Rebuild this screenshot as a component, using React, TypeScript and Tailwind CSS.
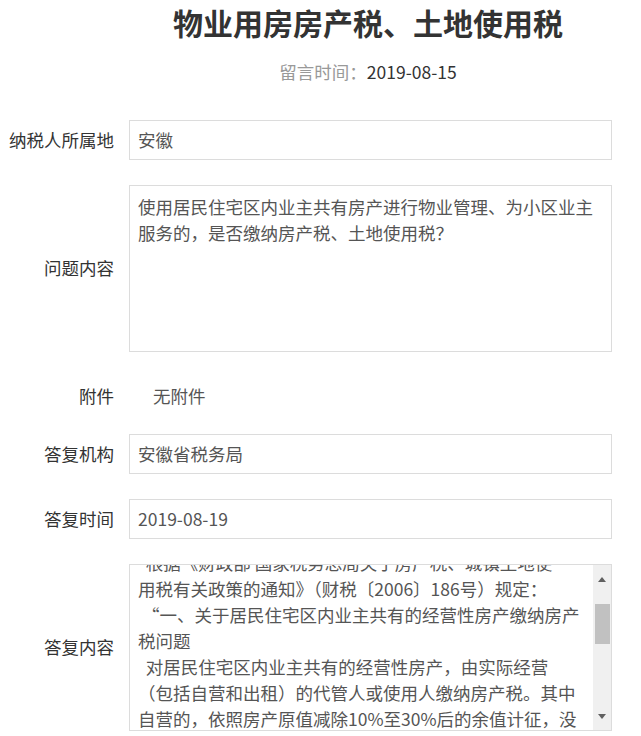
import React from 'react';

const question = [
  '使用居民住宅区内业主共有房产进行物业管理、为小区业主',
  '服务的，是否缴纳房产税、土地使用税？',
];

// reply body, pre-broken into the lines the box shows
const reply = [
  '\u00a0\u00a0根据《财政部 国家税务总局关于房产税、城镇土地使',
  '用税有关政策的通知》（财税〔2006〕186号）规定：',
  '\u00a0“一、关于居民住宅区内业主共有的经营性房产缴纳房产',
  '税问题',
  '\u00a0\u00a0对居民住宅区内业主共有的经营性房产，由实际经营',
  '（包括自营和出租）的代管人或使用人缴纳房产税。其中',
  '自营的，依照房产原值减除10%至30%后的余值计征，没',
];

function Row({ label, children, className = '' }: { label: string; children: React.ReactNode; className?: string }) {
  return (
    <div className={`flex items-center ${className}`}>
      <div className="w-[114px] shrink-0 text-right text-[17.5px] text-[#333] whitespace-nowrap">{label}</div>
      <div className="ml-[15px] flex-1">{children}</div>
    </div>
  );
}

function Field({ value }: { value: string }) {
  return (
    <div className="h-[40px] border border-[#dcdcdc] px-[8px] flex items-center text-[17.5px] text-[#555]">
      {value}
    </div>
  );
}

function ScrollBar() {
  return (
    <div className="w-[18px] shrink-0 bg-[#f0f0f0] flex flex-col items-center">
      <div className="h-[22px] flex items-end justify-center pb-[5px]">
        <div className="w-0 h-0 border-x-[4px] border-x-transparent border-b-[5px] border-b-[#606060]" />
      </div>
      <div className="mt-[17px] w-[15px] h-[40px] bg-[#c1c1c1]" />
      <div className="flex-1" />
      <div className="h-[22px] flex items-start justify-center pt-[6px]">
        <div className="w-0 h-0 border-x-[4px] border-x-transparent border-t-[5px] border-t-[#606060]" />
      </div>
    </div>
  );
}

export default function App() {
  return (
    <div className="w-[641px] h-[736px] overflow-hidden bg-white font-['Noto_Sans_CJK_SC','Noto_Sans',sans-serif]">
      {/* heading */}
      <div className="pl-[95px] text-center">
        <h1 className="text-[30px] leading-[44px] font-bold text-[#333]">物业用房房产税、土地使用税</h1>
        <p className="mt-4 text-[17.5px] leading-[24px]">
          <span className="text-[#999]">留言时间：</span>
          <span className="text-[#333]">2019-08-15</span>
        </p>
      </div>

      <div className="mt-[36px] pr-[29px] flex flex-col gap-[25px]">
        <Row label="纳税人所属地">
          <Field value="安徽" />
        </Row>

        <Row label="问题内容">
          <div className="h-[167px] border border-[#dcdcdc] px-[8px] pt-[8px] text-[17.5px] leading-[26px] text-[#555]">
            {question.map((line, i) => (
              <div key={i} className="whitespace-nowrap">{line}</div>
            ))}
          </div>
        </Row>

        <Row label="附件" className="h-[32px] pt-[6px]">
          <div className="pl-[24px] text-[17.5px] text-[#555]">无附件</div>
        </Row>

        <Row label="答复机构">
          <Field value="安徽省税务局" />
        </Row>

        <Row label="答复时间">
          <Field value="2019-08-19" />
        </Row>

        <Row label="答复内容">
          <div className="h-[167px] border border-[#dcdcdc] flex overflow-hidden">
            <div className="flex-1 overflow-hidden pl-[8px] text-[17.5px] leading-[26px] text-[#555]">
              <div className="-mt-[15px]">
                {reply.map((line, i) => (
                  <div key={i} className="whitespace-nowrap">{line}</div>
                ))}
              </div>
            </div>
            <ScrollBar />
          </div>
        </Row>
      </div>
    </div>
  );
}
